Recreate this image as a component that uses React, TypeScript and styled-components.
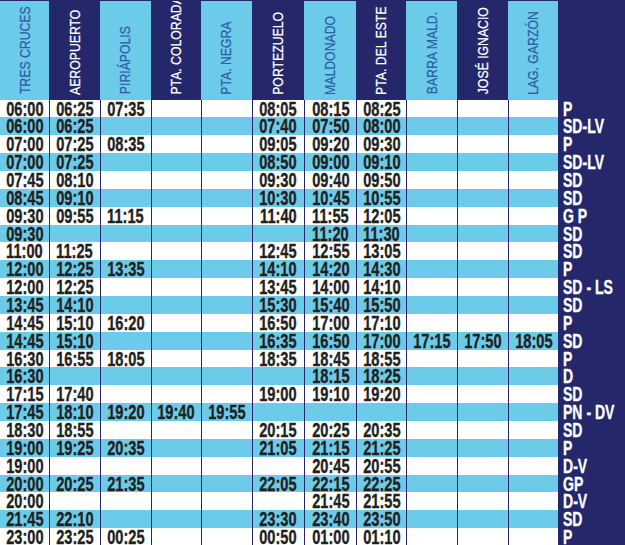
import styled, { createGlobalStyle } from "styled-components";

const GlobalStyle = createGlobalStyle`
  html, body {
    margin: 0;
    padding: 0;
    background: #ffffff;
  }
  body {
    font-family: "Liberation Sans", Arial, sans-serif;
  }
`;

const NAVY = "#24286b";
const SKY = "#6dcbea";

const COLS = "49px 50.5px 51px 50px 51px 52.5px 52px 50px 51px 51px 50px 67px";

const Table = styled.div`
  width: 625px;
  height: 545px;
  overflow: hidden;
  display: flex;
  flex-direction: column;
`;

const HeaderRow = styled.div`
  display: grid;
  grid-template-columns: ${COLS};
  height: 99.5px;
  flex-shrink: 0;
  border-top: 1px solid ${NAVY};
  box-sizing: border-box;
`;

const HeadCell = styled.div<{ $dark: boolean }>`
  background: ${(p) => (p.$dark ? NAVY : SKY)};
  color: ${(p) => (p.$dark ? "#ffffff" : "#2e5ca8")};
  -webkit-text-stroke: 0.25px ${(p) => (p.$dark ? "#ffffff" : "#2e5ca8")};
  display: flex;
  align-items: flex-end;
  justify-content: center;
  overflow: hidden;
  padding-bottom: 5px;
  box-sizing: border-box;
`;

const HeadLabel = styled.span`
  writing-mode: vertical-rl;
  transform: rotate(180deg);
  white-space: nowrap;
  font-size: 15.5px;
  line-height: 1;
  font-weight: 400;
`;

/* squeezes the label along its reading direction, keeping its start fixed */
const HeadSqueeze = styled.span`
  display: inline-block;
  transform: scaleY(0.79);
  transform-origin: 50% 0;
`;

const Row = styled.div<{ $alt: boolean }>`
  display: grid;
  grid-template-columns: ${COLS};
  height: 17.86px;
  flex-shrink: 0;
  background: ${(p) => (p.$alt ? SKY : "#ffffff")};
`;

const Cell = styled.div<{ $first: boolean }>`
  border-left: ${(p) => (p.$first ? "none" : `1.5px solid ${NAVY}`)};
  box-sizing: border-box;
  display: flex;
  justify-content: center;
  padding-top: 1px;
  font-size: 19.5px;
  font-weight: 700;
  line-height: 17.86px;
  color: #221f20;
  -webkit-text-stroke: 0.35px #221f20;
  white-space: nowrap;
`;

const Time = styled.span`
  flex: none;
  display: inline-block;
  margin: 0 -6px;
  transform: scaleX(0.75);
`;

const Note = styled.div`
  background: ${NAVY};
  color: #ffffff;
  -webkit-text-stroke: 0.3px #ffffff;
  font-size: 19.5px;
  font-weight: 700;
  line-height: 17.86px;
  padding: 1px 0 0 5px;
  box-sizing: border-box;
  white-space: pre;
`;

const NoteText = styled.span`
  display: inline-block;
  margin-right: -24px;
  transform: scaleX(0.72);
  transform-origin: 0 50%;
`;

const STOPS = [
  "TRES CRUCES",
  "AEROPUERTO",
  "PIRIÁPOLIS",
  "PTA. COLORADA",
  "PTA. NEGRA",
  "PORTEZUELO",
  "MALDONADO",
  "PTA. DEL ESTE",
  "BARRA MALD.",
  "JOSÉ IGNACIO",
  "LAG. GARZÓN",
];

type Trip = [string[], string];

const TRIPS: Trip[] = [
  [["06:00", "06:25", "07:35", "", "", "08:05", "08:15", "08:25", "", "", ""], "P"],
  [["06:00", "06:25", "", "", "", "07:40", "07:50", "08:00", "", "", ""], "SD-LV"],
  [["07:00", "07:25", "08:35", "", "", "09:05", "09:20", "09:30", "", "", ""], "P"],
  [["07:00", "07:25", "", "", "", "08:50", "09:00", "09:10", "", "", ""], "SD-LV"],
  [["07:45", "08:10", "", "", "", "09:30", "09:40", "09:50", "", "", ""], "SD"],
  [["08:45", "09:10", "", "", "", "10:30", "10:45", "10:55", "", "", ""], "SD"],
  [["09:30", "09:55", "11:15", "", "", "11:40", "11:55", "12:05", "", "", ""], "G P"],
  [["09:30", "", "", "", "", "", "11:20", "11:30", "", "", ""], "SD"],
  [["11:00", "11:25", "", "", "", "12:45", "12:55", "13:05", "", "", ""], "SD"],
  [["12:00", "12:25", "13:35", "", "", "14:10", "14:20", "14:30", "", "", ""], "P"],
  [["12:00", "12:25", "", "", "", "13:45", "14:00", "14:10", "", "", ""], "SD - LS"],
  [["13:45", "14:10", "", "", "", "15:30", "15:40", "15:50", "", "", ""], "SD"],
  [["14:45", "15:10", "16:20", "", "", "16:50", "17:00", "17:10", "", "", ""], "P"],
  [["14:45", "15:10", "", "", "", "16:35", "16:50", "17:00", "17:15", "17:50", "18:05"], "SD"],
  [["16:30", "16:55", "18:05", "", "", "18:35", "18:45", "18:55", "", "", ""], "P"],
  [["16:30", "", "", "", "", "", "18:15", "18:25", "", "", ""], "D"],
  [["17:15", "17:40", "", "", "", "19:00", "19:10", "19:20", "", "", ""], "SD"],
  [["17:45", "18:10", "19:20", "19:40", "19:55", "", "", "", "", "", ""], "PN - DV"],
  [["18:30", "18:55", "", "", "", "20:15", "20:25", "20:35", "", "", ""], "SD"],
  [["19:00", "19:25", "20:35", "", "", "21:05", "21:15", "21:25", "", "", ""], "P"],
  [["19:00", "", "", "", "", "", "20:45", "20:55", "", "", ""], "D-V"],
  [["20:00", "20:25", "21:35", "", "", "22:05", "22:15", "22:25", "", "", ""], "GP"],
  [["20:00", "", "", "", "", "", "21:45", "21:55", "", "", ""], "D-V"],
  [["21:45", "22:10", "", "", "", "23:30", "23:40", "23:50", "", "", ""], "SD"],
  [["23:00", "23:25", "00:25", "", "", "00:50", "01:00", "01:10", "", "", ""], "P"],
];

export default function App() {
  return (
    <>
      <GlobalStyle />
      <Table>
        <HeaderRow>
          {STOPS.map((stop, i) => (
            <HeadCell key={stop} $dark={i % 2 === 1}>
              <HeadLabel>
                <HeadSqueeze>{stop}</HeadSqueeze>
              </HeadLabel>
            </HeadCell>
          ))}
          <HeadCell $dark={true} />
        </HeaderRow>
        {TRIPS.map(([times, note], r) => (
          <Row key={r} $alt={r % 2 === 1}>
            {times.map((t, c) => (
              <Cell key={c} $first={c === 0}>
                {t && <Time>{t}</Time>}
              </Cell>
            ))}
            <Note>
              <NoteText>{note}</NoteText>
            </Note>
          </Row>
        ))}
      </Table>
    </>
  );
}
